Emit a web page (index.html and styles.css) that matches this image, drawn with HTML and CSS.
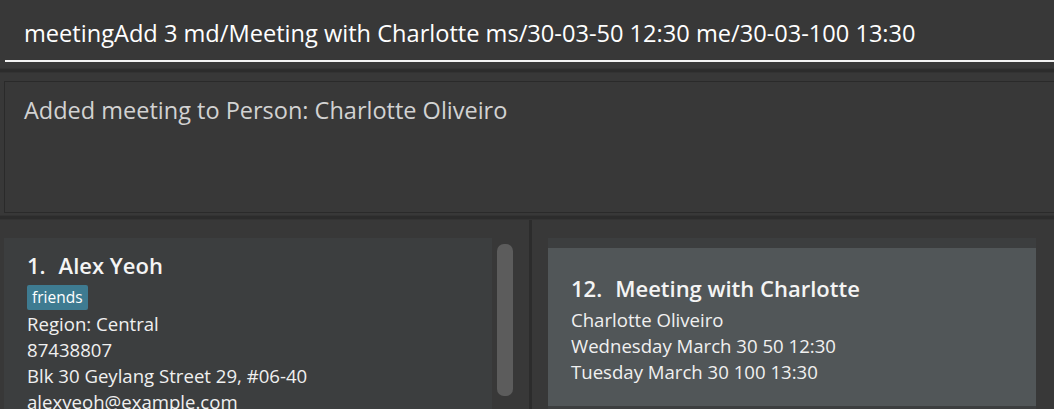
FILE: index.html
```html
<!DOCTYPE html>
<html>
<head>
<meta charset="utf-8">
<link rel="stylesheet" href="styles.css">
</head>
<body>
<div class="app">
  <div class="command-pane">
    <div class="command-box">meetingAdd 3 md/Meeting with Charlotte ms/30-03-50 12:30 me/30-03-100 13:30</div>
  </div>
  <div class="divider-h"></div>
  <div class="result-pane">
    <div class="result-box">Added meeting to Person: Charlotte Oliveiro</div>
  </div>
  <div class="divider-h"></div>
  <div class="lists">
    <div class="person-pane">
      <div class="person-list">
        <div class="person-card">
          <div class="card-title"><span class="idx">1.</span>Alex Yeoh</div>
          <div class="tags"><span class="tag">friends</span></div>
          <div class="line">Region: Central</div>
          <div class="line">87438807</div>
          <div class="line">Blk 30 Geylang Street 29, #06-40</div>
          <div class="line">alexyeoh@example.com</div>
        </div>
      </div>
      <div class="scroll-track"><div class="thumb"></div></div>
    </div>
    <div class="divider-v"></div>
    <div class="meeting-pane">
      <div class="meeting-cell">
        <div class="meeting-card">
          <div class="card-title"><span class="idx">12.</span>Meeting with Charlotte</div>
          <div class="line">Charlotte Oliveiro</div>
          <div class="line">Wednesday March 30 50 12:30</div>
          <div class="line">Tuesday March 30 100 13:30</div>
        </div>
      </div>
    </div>
  </div>
</div>
</body>
</html>
```

FILE: styles.css
```css
html, body {
  margin: 0;
  padding: 0;
  background: #383838;
}
body {
  font-family: "Open Sans", "Noto Sans", sans-serif;
  color: #ffffff;
  width: 1054px;
  height: 409px;
  overflow: hidden;
}
.app {
  display: flex;
  flex-direction: column;
  height: 409px;
}
.command-pane {
  height: 68px;
  padding-left: 5px;
  box-sizing: border-box;
}
.command-box {
  height: 62px;
  box-sizing: border-box;
  border-bottom: 2px solid #f2f2f2;
  padding-left: 19px;
  font-size: 23.6px;
  line-height: 66px;
  color: #ffffff;
  white-space: nowrap;
}
.divider-h {
  height: 3px;
  background: #2c2c2c;
  border-top: 1px solid #333;
  border-bottom: 1px solid #333;
}
.result-pane {
  height: 142px;
  padding: 8px 0 0 4px;
  box-sizing: border-box;
}
.result-box {
  height: 132px;
  box-sizing: border-box;
  border: 1px solid #2a2a2a;
  border-right: none;
  padding: 12px 0 0 19px;
  font-size: 23.5px;
  line-height: 32px;
  color: #d2d2d2;
}
.lists {
  flex: 1;
  display: flex;
  min-height: 0;
}
.person-pane {
  width: 529px;
  display: flex;
  padding: 18px 0 0 4px;
  box-sizing: border-box;
}
.person-list {
  width: 488px;
  background: #3c3e3f;
}
.person-card {
  padding: 13px 0 0 23px;
}
.card-title {
  font-weight: 600;
  font-size: 22px;
  line-height: 28px;
  color: #f4f4f4;
  white-space: nowrap;
}
.idx {
  display: inline-block;
  margin-right: 13px;
}
.tags {
  display: flex;
  margin: 6px 0 1px;
}
.tag {
  background: #3e7b91;
  color: #ffffff;
  font-size: 15.5px;
  line-height: 25px;
  padding: 0 5px;
  border-radius: 2px;
}
.line {
  font-size: 18.6px;
  line-height: 26px;
  color: #f0f0f0;
  white-space: nowrap;
}
.scroll-track {
  width: 37px;
  padding: 6px 0 0 5px;
  box-sizing: border-box;
}
.thumb {
  width: 16px;
  height: 152px;
  background: #5c5c5c;
  border-radius: 7px;
}
.divider-v {
  width: 3px;
  background: #2c2c2c;
}
.meeting-pane {
  flex: 1;
  padding: 18px 0 0 16px;
  box-sizing: border-box;
}
.meeting-cell {
  width: 488px;
  background: #3c3e3f;
  padding-top: 10px;
  padding-bottom: 10px;
}
.meeting-card {
  background: #515658;
  height: 158px;
  box-sizing: border-box;
  padding: 26px 0 0 23px;
}
.meeting-card .card-title {
  margin-bottom: 5px;
}
```
